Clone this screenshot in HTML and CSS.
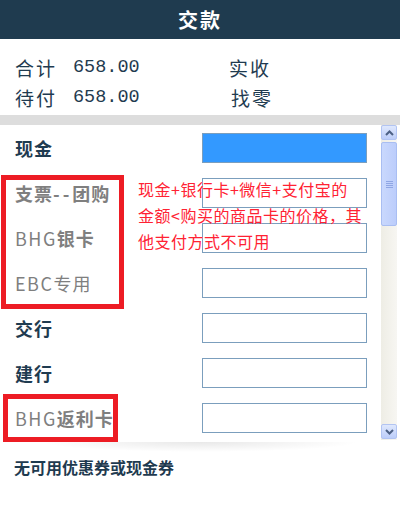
FILE: index.html
```html
<!DOCTYPE html>
<html lang="zh-CN">
<head>
  <meta charset="UTF-8">
  <meta name="viewport" content="width=device-width, initial-scale=1.0">
  <title>交款</title>
  <link rel="stylesheet" href="styles.css">
</head>
<body>
  <div class="app">
    <header class="title-bar">交款</header>

    <div class="summary">
      <div class="sum-row">
        <span class="sum-label">合计</span>
        <span class="sum-value">658.00</span>
        <span class="sum-label">实收</span>
      </div>
      <div class="sum-row">
        <span class="sum-label">待付</span>
        <span class="sum-value">658.00</span>
        <span class="sum-label sum-shift">找零</span>
      </div>
    </div>

    <div class="divider"></div>

    <div class="pay-area">
      <div class="pay-list">
        <div class="pay-row">
          <span class="pay-label">现金</span>
          <input class="pay-input active" type="text">
        </div>
        <div class="pay-row">
          <span class="pay-label muted">支票<span class="dash">--</span>团购</span>
          <input class="pay-input" type="text">
        </div>
        <div class="pay-row">
          <span class="pay-label muted"><span class="latin">BHG</span>银卡</span>
          <input class="pay-input" type="text">
        </div>
        <div class="pay-row">
          <span class="pay-label muted thin"><span class="latin">EBC</span>专用</span>
          <input class="pay-input" type="text">
        </div>
        <div class="pay-row">
          <span class="pay-label">交行</span>
          <input class="pay-input" type="text">
        </div>
        <div class="pay-row">
          <span class="pay-label">建行</span>
          <input class="pay-input" type="text">
        </div>
        <div class="pay-row">
          <span class="pay-label muted"><span class="latin">BHG</span>返利卡</span>
          <input class="pay-input" type="text">
        </div>

        <p class="note">现金+银行卡+微信+支付宝的<br>金额&lt;购买的商品卡的价格，其<br>他支付方式不可用</p>
      </div>

      <div class="scrollbar">
        <div class="sb-btn"><svg width="9" height="6" viewBox="0 0 9 6"><path d="M1 5 L4.5 1.5 L8 5" fill="none" stroke="#4d6185" stroke-width="2"/></svg></div>
        <div class="sb-thumb"><span class="grip"></span></div>
        <div class="sb-track"></div>
        <div class="sb-btn"><svg width="9" height="6" viewBox="0 0 9 6"><path d="M1 1 L4.5 4.5 L8 1" fill="none" stroke="#4d6185" stroke-width="2"/></svg></div>
      </div>
    </div>

    <div class="shadow-line"></div>
    <div class="coupon">无可用优惠券或现金券</div>

    <div class="mark mark-group"></div>
    <div class="mark mark-rebate"></div>
  </div>
</body>
</html>
```

FILE: styles.css
```css
* {
  box-sizing: border-box;
  margin: 0;
  padding: 0;
}

body {
  font-family: "Noto Sans CJK SC", "Noto Sans", sans-serif;
  background: #ffffff;
  color: #1f3b50;
}

.app {
  position: relative;
  width: 400px;
  height: 531px;
}

.title-bar {
  height: 39px;
  line-height: 39px;
  background: #1f3b4f;
  color: #ffffff;
  text-align: center;
  font-size: 20px;
  font-weight: bold;
  letter-spacing: 2px;
}

.summary {
  padding: 13px 0 3px 15px;
}

.sum-row {
  display: flex;
  align-items: center;
  height: 30px;
  font-size: 19px;
}

.sum-label {
  width: 58px;
  letter-spacing: 2px;
}

.sum-value {
  width: 156px;
  font-family: "Liberation Mono", monospace;
  font-size: 18.5px;
}

.sum-shift {
  padding-left: 2px;
}

.divider {
  height: 10px;
  background: #dddddd;
}

.pay-area {
  display: flex;
  height: 315px;
  padding-right: 3px;
}

.pay-list {
  position: relative;
  flex: 1;
  overflow: hidden;
}

.pay-row {
  display: flex;
  align-items: center;
  height: 45px;
  padding-left: 15px;
}

.pay-label {
  width: 187px;
  font-size: 18px;
  font-weight: bold;
  color: #1f3b50;
  letter-spacing: 1px;
}

.pay-label.muted {
  color: #7f7f7f;
}

.pay-label.thin {
  font-weight: normal;
}

.latin {
  font-weight: normal;
  letter-spacing: 1.5px;
}

.dash {
  letter-spacing: 3px;
}

.pay-input {
  width: 165px;
  height: 30px;
  border: 1px solid #7b9ebd;
  background: #ffffff;
  outline: none;
}

.pay-input.active {
  background: #3399ff;
}

.note {
  position: absolute;
  left: 138px;
  top: 51px;
  font-size: 16px;
  line-height: 26px;
  color: #ff2233;
  letter-spacing: 0.5px;
  white-space: nowrap;
}

.scrollbar {
  display: flex;
  flex-direction: column;
  width: 16px;
  background: linear-gradient(to right, #eeede5, #f7f6f2);
}

.sb-btn {
  display: flex;
  align-items: center;
  justify-content: center;
  height: 15px;
  margin-bottom: 1px;
  background: linear-gradient(to bottom, #dfe8fd, #bccdf9);
  border: 1px solid #b2c4f2;
  border-radius: 2px;
}

.sb-btn:last-child {
  margin: 0 0 1px;
}

.sb-thumb {
  display: flex;
  align-items: center;
  justify-content: center;
  height: 84px;
  margin-top: 1px;
  background: linear-gradient(to right, #c9d8fd, #bccdfb);
  border: 1px solid #a9bef2;
  border-radius: 2px;
}

.grip {
  width: 7px;
  height: 7px;
  background: repeating-linear-gradient(to bottom, #8fa6e4 0 1px, transparent 1px 2px);
}

.sb-track {
  flex: 1;
}

.shadow-line {
  height: 10px;
  margin: 2px 40px 0;
  background: radial-gradient(ellipse at 50% 0%, rgba(0, 0, 0, 0.09), rgba(0, 0, 0, 0) 70%);
}

.coupon {
  padding: 5px 0 0 14px;
  font-size: 16px;
  line-height: 20px;
  font-weight: bold;
  color: #1f3b50;
}

.mark {
  position: absolute;
  border: 5px solid #ed1c24;
}

.mark-group {
  left: 1px;
  top: 175px;
  width: 123px;
  height: 134px;
}

.mark-rebate {
  left: 3px;
  top: 394px;
  width: 115px;
  height: 48px;
}
```
